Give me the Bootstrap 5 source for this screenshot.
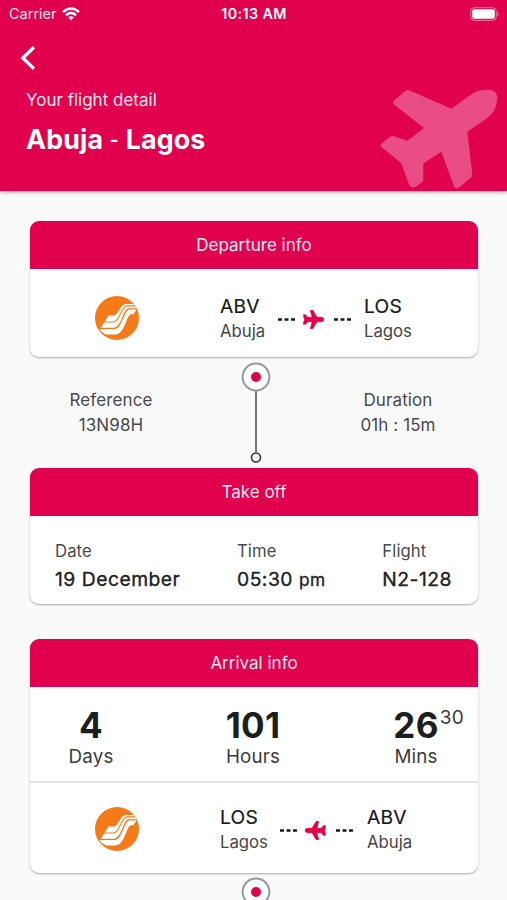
<!DOCTYPE html>
<html lang="en">
<head>
<meta charset="utf-8">
<meta name="viewport" content="width=device-width, initial-scale=1">
<title>Flight detail</title>
<link href="https://cdn.jsdelivr.net/npm/bootstrap@5.3.0/dist/css/bootstrap.min.css" rel="stylesheet">
<style>
  :root { --brand: #e0004d; }
  body { font-family: Inter, "Liberation Sans", sans-serif; background: #fafafa; color: #202124; letter-spacing: .1px; }
  .screen { width: 507px; height: 900px; }
  .hero { height: 191px; background: var(--brand); box-shadow: 0 1px 4px rgba(0,0,0,.4); }
  .status-line { height: 28px; padding: 0 7px 0 9px; font-size: 14.5px; line-height: 28px; }
  .status-line > * { flex: 1 1 0; }
  .clock { font-weight: 600; font-size: 14.3px; letter-spacing: .4px; margin-left: -1px; }
  .carrier { letter-spacing: 0; opacity: .9; }
  .wifi { margin-left: 5px; }
  .back-btn { margin: 16px 0 0 20px; width: 17px; height: 28px; }
  .hero-sub { margin: 17px 0 0 26px; font-size: 17px; line-height: 22px; letter-spacing: 0; color: #ffe4ee; }
  .hero-title { margin: 12px 0 0 26px; font-size: 26.8px; line-height: 32px; font-weight: 700; letter-spacing: .15px; }
  .hero-title span { display: inline-block; font-weight: 400; transform: scaleX(.75); margin: 0 -1.5px; }
  .hero-plane { right: 8px; bottom: 1px; }
  .page-main { padding: 30px 29px 0 30px; }
  .info-card { border: 0; border-radius: 9px; box-shadow: 0 1px 2px rgba(0,0,0,.32); }
  .info-card .card-header { height: 48px; background: var(--brand); border: 0; border-radius: 9px 9px 0 0; color: #ffe8f0; font-size: 17px; line-height: 48px; padding: 0; letter-spacing: 0; }
  .route { height: 88px; padding: 10px 0 0 65px; }
  .route.return { height: 90px; padding-top: 2px; }
  .stop { font-size: 16.8px; line-height: 25px; color: #454648; letter-spacing: -.05px; margin-top: 1px; }
  .stop b { display: block; font-size: 19.2px; font-weight: 400; color: #18191b; letter-spacing: .2px; -webkit-text-stroke: .2px #18191b; }
  .from { width: 58px; margin-left: 81px; }
  .link-row { width: 73px; margin-top: 3px; }
  .link-row + .stop { margin-left: 13px; }
  .return .link-row { margin-left: 2px; }
  .return .link-row + .stop { margin-left: 14px; }
  .link-row svg:nth-child(2) { position: relative; left: -1.5px; }
  .trip { height: 111px; padding-right: 1px; }
  .trip-col { width: 162px; padding-top: 31px; font-size: 17px; line-height: 24.5px; color: #48494b; text-align: center; letter-spacing: .1px; }
  .timeline { width: 32px; height: 105px; margin: 5px 0 0 4.5px; }
  .timeline.next { margin-top: 4px; }
  .takeoff { height: 88px; padding: 23px 26px 0 25px; }
  .takeoff small { display: block; font-size: 16.7px; line-height: 25px; color: #48494b; }
  .takeoff strong { display: block; font-size: 19.3px; font-weight: 400; line-height: 31px; letter-spacing: .5px; white-space: nowrap; -webkit-text-stroke: .35px #202124; }
  .takeoff strong span { font-size: 17.3px; }
  .second { margin-top: 35px; }
  .countdown { height: 96px; padding: 20px 0 0; border-bottom: 2px solid #e3e3e3; }
  .unit { text-align: center; font-size: 18.8px; line-height: 27px; color: #3a3b3d; letter-spacing: .15px; }
  .unit b { display: block; font-size: 35px; line-height: 36px; font-weight: 700; color: #1d1e20; letter-spacing: .3px; }
  .unit sup { left: 100%; top: 4px; margin-left: 1px; font-size: 19px; line-height: 20px; color: #3a3b3d; }
  .u-days { width: 122px; }
  .u-hours { width: 202px; }
  .u-mins { width: 124px; }
</style>
</head>
<body>
<svg class="d-none" xmlns="http://www.w3.org/2000/svg">
  <symbol id="logo" viewBox="0 0 44 44">
    <circle cx="22" cy="22" r="22" fill="#f67a1a"/>
    <path d="M13.500 19.500H19C23 19 25 9.500 30 8H38L40 9.300H32C26 10.500 24.500 24 18.500 25.500H9.800Z" fill="#fff"/>
    <path d="M9.300 26.600H19C25 25.500 26.500 12 32 10.600H40.600L41.600 12.300H33C28 13.500 27 30.500 19 31.800H5.500Z" fill="#fff"/>
    <path d="M4.500 33H20C27 32.500 29 15 34 13.500H41.500L38.500 18.300H36C31 19.500 30 37.500 21 38.500H11L6 35.500Z" fill="#fff"/>
  </symbol>
  <symbol id="plane" viewBox="0 0 20 18">
    <path d="M7 .3H9.300L13.300 6.900H17.500C20.700 7.300 20.700 10.700 17.500 11.100H13.300L9.300 17.700H7L8.700 11.100H4.400L2.500 13.500H.4L1.300 9L.4 4.500H2.500L4.400 6.900H8.700Z" fill="#e0004d" stroke="#e0004d" stroke-width=".7" stroke-linejoin="round"/>
  </symbol>
  <symbol id="dots" viewBox="0 0 17 3">
    <path d="M0 .2H4V2.800H0ZM6.500 .2H10.500V2.800H6.500ZM13 .2H17V2.800H13Z" fill="#191919"/>
  </symbol>
  <symbol id="line" viewBox="0 0 32 105">
    <path d="M16 29V90" stroke="#555" stroke-width="1.600"/>
    <circle cx="16" cy="15" r="13.400" fill="#fff" stroke="#999" stroke-width="2"/>
    <circle cx="16" cy="15" r="5" fill="#e0004d"/>
    <circle cx="16" cy="95.500" r="4.500" fill="#fff" stroke="#333" stroke-width="1.600"/>
  </symbol>
</svg>

<div class="screen position-relative overflow-hidden">
  <header class="hero position-relative text-white">
    <div class="status-line d-flex align-items-center">
      <div class="d-flex align-items-center"><span class="carrier">Carrier</span>
        <svg class="wifi" width="18" height="14" viewBox="0 0 18 14" fill="none" stroke="#fff" stroke-width="2.500"><path d="M.9 5.200Q9-2.300 17.100 5.200M3.900 8.200Q9 3.600 14.100 8.200"/><path d="M6.100 10.300Q9 8 11.900 10.300L9 13.300Z" fill="#fff" stroke="none"/></svg>
      </div>
      <div class="clock text-center">10:13 AM</div>
      <div class="d-flex justify-content-end"><svg width="30" height="14" viewBox="0 0 30 14"><rect x=".7" y=".7" width="25.600" height="12.600" rx="3.700" fill="none" stroke="#fff" stroke-opacity=".5"/><rect x="2.200" y="2.200" width="22.600" height="9.600" rx="2" fill="#fff"/><path d="M27.600 4.700Q30.200 7 27.600 9.300Z" fill="#fff" fill-opacity=".5"/></svg></div>
    </div>
    <a class="back-btn d-block" href="#" aria-label="Back"><svg class="d-block" width="17" height="28" viewBox="0 0 17 28" fill="none" stroke="#fff" stroke-width="3.300"><path d="M14 3.200L2.800 14L14 24.800"/></svg></a>
    <div class="hero-sub">Your flight detail</div>
    <h1 class="hero-title mb-0">Abuja <span>-</span> Lagos</h1>
    <svg class="hero-plane position-absolute" width="119" height="102" viewBox="380 88 119 102">
      <path d="M406 90.500Q408 89.500 410 90.500L451.300 108.700L474 92.500Q480 89.500 489 89.800Q497.500 90.300 497.300 99Q496.500 112 486 119L467.300 131.700L472.300 174Q472.500 176.500 470.500 178L459 187.500Q455.500 190 454 186.500L441.300 151.700L423.300 163.500V179.500Q423.300 181.200 422 182.200L416 186.500Q411 189 409 184.500L401.300 163.300L381.500 147Q379.800 145 381.500 143.500L389.500 137Q391.500 135.700 394 136.200L407.300 140.700L424 128L394 104.500Q392 102.500 394 100.500Z" fill="#ea4d85"/>
    </svg>
  </header>

  <main class="page-main">
    <section class="card info-card">
      <div class="card-header text-center">Departure info</div>
      <div class="route d-flex align-items-center">
        <svg width="44" height="44"><use href="#logo"/></svg>
        <div class="stop from"><b>ABV</b>Abuja</div>
        <div class="link-row d-flex align-items-center justify-content-between">
          <svg width="17" height="3"><use href="#dots"/></svg>
          <svg width="21" height="19"><use href="#plane"/></svg>
          <svg width="17" height="3"><use href="#dots"/></svg>
        </div>
        <div class="stop"><b>LOS</b>Lagos</div>
      </div>
    </section>

    <div class="trip d-flex justify-content-between">
      <div class="trip-col">Reference<br>13N98H</div>
      <svg class="timeline" viewBox="0 0 32 105"><use href="#line"/></svg>
      <div class="trip-col ps-1">Duration<br>01h : 15m</div>
    </div>

    <section class="card info-card">
      <div class="card-header text-center">Take off</div>
      <div class="takeoff d-flex justify-content-between">
        <div><small>Date</small><strong>19 December</strong></div>
        <div><small>Time</small><strong>05:30 <span>pm</span></strong></div>
        <div><small>Flight</small><strong>N2-128</strong></div>
      </div>
    </section>

    <section class="card info-card second">
      <div class="card-header text-center">Arrival info</div>
      <div class="countdown d-flex">
        <div class="unit u-days"><b>4</b>Days</div>
        <div class="unit u-hours"><b>101</b>Hours</div>
        <div class="unit u-mins"><b><span class="position-relative">26<sup class="position-absolute fw-normal">30</sup></span></b>Mins</div>
      </div>
      <div class="route return d-flex align-items-center">
        <svg width="44" height="44"><use href="#logo"/></svg>
        <div class="stop from"><b>LOS</b>Lagos</div>
        <div class="link-row d-flex align-items-center justify-content-between">
          <svg width="17" height="3"><use href="#dots"/></svg>
          <svg width="21" height="19"><use href="#plane" transform="translate(21 0) scale(-1 1)"/></svg>
          <svg width="17" height="3"><use href="#dots"/></svg>
        </div>
        <div class="stop"><b>ABV</b>Abuja</div>
      </div>
    </section>
    <div class="d-flex justify-content-center">
      <svg class="timeline next" viewBox="0 0 32 105"><use href="#line"/></svg>
    </div>
  </main>
</div>
<script src="https://cdn.jsdelivr.net/npm/bootstrap@5.3.0/dist/js/bootstrap.bundle.min.js"></script>
</body>
</html>
